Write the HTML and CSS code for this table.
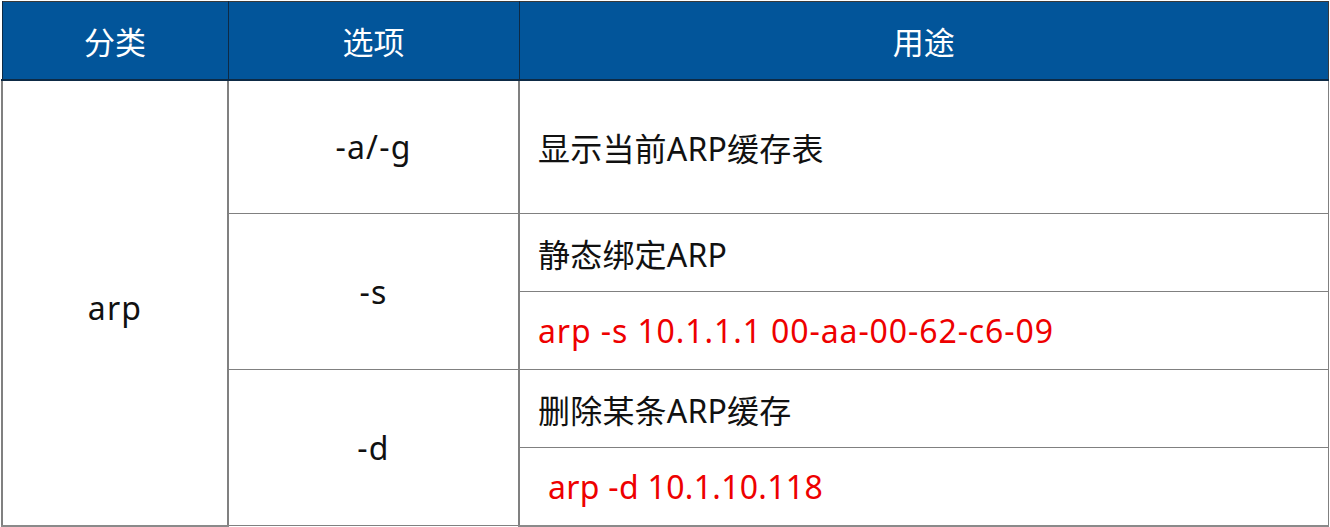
FILE: index.html
```html
<!DOCTYPE html>
<html>
<head>
<meta charset="utf-8">
<link rel="stylesheet" href="styles.css">
</head>
<body>
<table class="tbl">
  <colgroup>
    <col class="c1"><col class="c2"><col class="c3">
  </colgroup>
  <thead>
    <tr class="head"><th>分类</th><th>选项</th><th>用途</th></tr>
  </thead>
  <tbody>
    <tr class="tall">
      <td class="center latin cat" rowspan="5">arp</td>
      <td class="center latin">-a/-g</td>
      <td class="desc">显示当前ARP缓存表</td>
    </tr>
    <tr class="row">
      <td class="center latin" rowspan="2">-s</td>
      <td class="desc">静态绑定ARP</td>
    </tr>
    <tr class="row">
      <td class="desc red">arp -s 10.1.1.1 00-aa-00-62-c6-09</td>
    </tr>
    <tr class="row">
      <td class="center latin" rowspan="2">-d</td>
      <td class="desc">删除某条ARP缓存</td>
    </tr>
    <tr class="row">
      <td class="desc red indent">arp -d 10.1.10.118</td>
    </tr>
  </tbody>
</table>
</body>
</html>
```

FILE: styles.css
```css
html, body {
  margin: 0;
  padding: 0;
  background: #ffffff;
}
body {
  padding: 1px 1px 0 1px;
  font-family: "Noto Sans", "Noto Sans CJK SC", sans-serif;
}
.tbl {
  border-collapse: collapse;
  table-layout: fixed;
  width: 1328px;
  border: 1px solid #3a3a3a;
}
.c1 { width: 226px; }
.c2 { width: 291px; }
.c3 { width: auto; }
.head {
  height: 78px;
  background: #02559a;
}
.head th {
  color: #ffffff;
  font-weight: 400;
  font-size: 31px;
  text-align: center;
  border-bottom: 2px solid #0d2a45;
  border-left: 1px solid #0d2a45;
  padding: 0;
}
.tall { height: 134px; }
.row { height: 78px; }
td {
  border: 1px solid #808080;
  border-left-width: 2px;
  font-size: 32px;
  color: #111111;
  padding: 0;
  vertical-align: middle;
}
tbody tr:last-child td, td[rowspan="5"] {
  border-bottom: 2px solid #8a8a8a;
}
.center { text-align: center; }
.latin { letter-spacing: 1.2px; }
.cat { padding-top: 10px; }
.desc {
  text-align: left;
  padding-left: 18px;
  letter-spacing: 0.2px;
}
.red {
  color: #ee0000;
  letter-spacing: 0.9px;
}
.indent {
  padding-left: 28px;
  letter-spacing: 0.3px;
}
```
